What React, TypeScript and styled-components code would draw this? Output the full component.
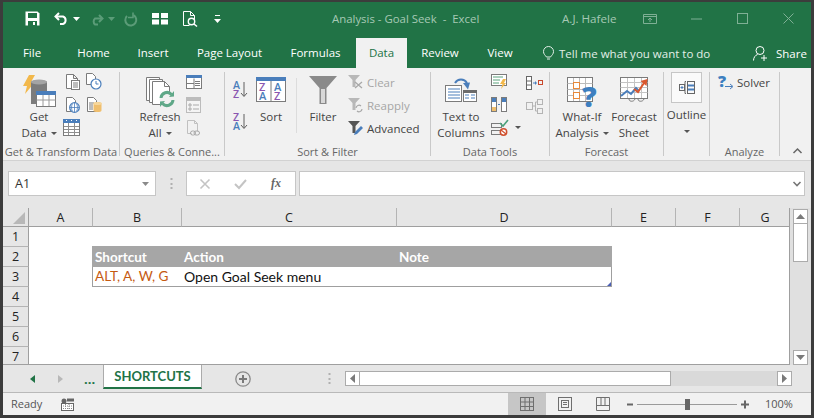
import React from "react";
import styled, { createGlobalStyle } from "styled-components";

const Global = createGlobalStyle`
  html, body { margin: 0; padding: 0; background: #fff; }
  * { box-sizing: border-box; }
`;
const UI = `"Open Sans", "Noto Sans", sans-serif`;
const GREEN = "#217346";

const Frame = styled.div`
  width: 814px; height: 418px; overflow: hidden; display: flex; flex-direction: column;
  border: 3px solid #3c3c3c; border-top-width: 2px; background: #e6e6e6;
  font-family: ${UI}; font-size: 11.5px; color: #444;
`;
const TitleBar = styled.div`
  height: 33px; flex: none; background: ${GREEN}; display: flex; align-items: center; padding-left: 22px; color: #a6c9b5;
`;
const Qat = styled.div`display: flex; align-items: center; width: 307px;`;
const QatItem = styled.span<{ $gap?: number }>`display: block; margin-right: ${p => p.$gap ?? 0}px; line-height: 0;`;
const DocTitle = styled.div`width: 230px; font-size: 11.4px; white-space: pre;`;
const UserName = styled.div`width: 81px; font-size: 11.6px; white-space: pre;`;
const WinBtn = styled.span<{ $w: number }>`display: block; width: ${p => p.$w}px; line-height: 0;`;

const TabBar = styled.div`
  height: 33px; flex: none; background: ${GREEN}; display: flex; align-items: flex-end; color: #fff; font-size: 11.5px;
`;
const RTab = styled.div<{ $w: number; $active?: boolean }>`
  width: ${p => p.$w}px; height: 30px; line-height: 30px; text-align: center; white-space: nowrap; flex: none;
  ${p => p.$active ? `background:#f1f1f1;color:${GREEN};` : ""}
`;
const TellMe = styled.div`display: flex; align-items: center; gap: 5px; width: 226px; height: 30px; padding-left: 16px; color: #e3efe8; white-space: nowrap;`;
const ShareBox = styled.div`display: flex; align-items: center; gap: 8px; height: 30px;`;

const Ribbon = styled.div`
  height: 93px; flex: none; background: #f1f1f1; border-bottom: 1px solid #d2d2d2; display: flex; padding-top: 4px; color: #444;
`;
const Group = styled.div<{ $w: number }>`
  width: ${p => p.$w}px; height: 84px; flex: none; display: flex; flex-direction: column; border-right: 1px solid #c9c9c9;
`;
const GroupBody = styled.div<{ $pl?: number }>`height: 74px; display: flex; align-items: flex-start; padding-left: ${p => p.$pl ?? 0}px;`;
const GroupLabel = styled.div`height: 10px; line-height: 12px; text-align: center; color: #666; font-size: 11px; white-space: nowrap;`;
const Large = styled.div<{ $w: number; $ml?: number }>`
  width: ${p => p.$w}px; margin-left: ${p => p.$ml ?? 0}px; flex: none; display: flex; flex-direction: column; align-items: center;
`;
const LargeIcon = styled.div<{ $pt?: number }>`height: 37px; padding-top: ${p => p.$pt ?? 2}px; line-height: 0;`;
const LargeText = styled.div`line-height: 16px; text-align: center; white-space: nowrap;`;
const Caret = styled.span`
  display: inline-block; width: 0; height: 0; margin-left: 4px; vertical-align: 2px;
  border-left: 3px solid transparent; border-right: 3px solid transparent; border-top: 3px solid #555;
`;
const SmallCol = styled.div<{ $w?: number; $ml?: number; $pt?: number; $gap?: number }>`
  width: ${p => p.$w ?? 16}px; margin-left: ${p => p.$ml ?? 0}px; padding-top: ${p => p.$pt ?? 0}px;
  flex: none; display: flex; flex-direction: column; gap: ${p => p.$gap ?? 5}px;
`;
const SmallCell = styled.div<{ $ml?: number }>`height: 18px; display: flex; align-items: center; margin-left: ${p => p.$ml ?? 0}px; line-height: 0;`;
const VSep = styled.div`width: 1px; height: 55px; background: #dcdcdc; margin: 6px 0 0 5px; flex: none;`;
const FilterList = styled.div`margin-left: 5px; display: flex; flex-direction: column; gap: 5px; padding-top: 1px;`;
const FilterRow = styled.div<{ $off?: boolean }>`
  height: 18px; display: flex; align-items: center; gap: 3px; white-space: nowrap; color: ${p => p.$off ? "#a6a6a6" : "#444"};
`;
const OutlineBox = styled.div`
  width: 31px; height: 31px; margin-bottom: 4px; background: #fafafa; border: 1px solid #c6c6c6; display: flex; align-items: center; justify-content: center;
`;
const SolverRow = styled.div`display: flex; align-items: center; gap: 3px; height: 18px; margin-top: 1px;`;
const Collapse = styled.div`flex: 1; display: flex; justify-content: center; padding: 76px 0 0 4px; line-height: 0;`;

const FormulaArea = styled.div`
  height: 47px; flex: none; display: flex; align-items: flex-start; padding: 10px 6px 0 5px; background: #e6e6e6;
`;
const NameBox = styled.div`
  width: 148px; height: 25px; background: #fff; border: 1px solid #c6c6c6; display: flex; align-items: center; justify-content: space-between;
  padding: 0 6px 0 6px; font-size: 12.5px; color: #333;
`;
const Grip = styled.div`width: 30px; height: 25px; display: flex; align-items: center; justify-content: center; line-height: 0;`;
const FxBox = styled.div`
  width: 110px; height: 25px; background: #fff; border: 1px solid #c6c6c6; display: flex; align-items: center; gap: 24px; padding-left: 13px;
`;
const FxText = styled.span`font-family: "Liberation Serif", serif; font-style: italic; font-weight: 700; font-size: 12px; color: #666;`;
const FormulaInput = styled.div`
  flex: 1; margin-left: 3px; height: 25px; background: #fff; border: 1px solid #c6c6c6; display: flex; align-items: center; justify-content: flex-end; padding-right: 3px; line-height: 0;
`;

const SheetArea = styled.div`height: 157px; flex: none; display: flex;`;
const Sheet = styled.div`
  width: 787px; height: 157px; overflow: hidden; flex: none; background: #fff;
  display: grid; align-content: start; grid-template-columns: 26px 64px 89px 215px 215px 64px 64px 50px; grid-template-rows: 19px repeat(7, 20px);
  border-right: 1px solid #9f9f9f; border-bottom: 1px solid #9f9f9f;
`;
const Corner = styled.div`
  background: #e6e6e6; border-bottom: 1px solid #9f9f9f; border-right: 1px solid #9f9f9f; display: flex; align-items: flex-end; justify-content: flex-end; padding: 0 3px 2px 0; line-height: 0;
`;
const ColHead = styled.div<{ $last?: boolean }>`
  background: #e6e6e6; border-bottom: 1px solid #9f9f9f; border-right: ${p => p.$last ? "0" : "1px solid #b4b4b4"};
  text-align: center; line-height: 19px; font-size: 12.5px; color: #222;
`;
const RowHead = styled.div`
  background: #e6e6e6; border-bottom: 1px solid #b4b4b4; border-right: 1px solid #9f9f9f; text-align: center; line-height: 20px; font-size: 12.5px; color: #222;
`;
const Cell = styled.div`background: #fff;`;
const HeadCell = styled.div<{ $first?: boolean }>`
  background: #a6a6a6; color: #fff; font-family: Lato, sans-serif; font-weight: 700; font-size: 13.5px; line-height: 23px; white-space: nowrap; height: 21px; margin-top: -1px;
  ${p => p.$first ? "margin-left: -1px; padding-left: 3px;" : "padding-left: 2px;"}
`;
const BodyCell = styled.div<{ $tone?: boolean; $left?: boolean; $right?: boolean }>`
  position: relative; height: 20px; border-bottom: 1px solid #9f9f9f;
  ${p => p.$left ? "border-left: 1px solid #9f9f9f; margin-left: -1px; padding-left: 2px;" : "padding-left: 2px;"}
  ${p => p.$right ? "border-right: 1px solid #9f9f9f;" : ""}
  font-family: Lato, sans-serif; font-size: ${p => p.$tone ? 13.6 : 14}px; line-height: 19px; white-space: nowrap;
  color: ${p => p.$tone ? "#c55a11" : "#111"};
`;
const ResizeMark = styled.span`
  position: absolute; right: 0; bottom: 0; width: 0; height: 0; border-left: 4px solid transparent; border-bottom: 4px solid #4a5fb5;
`;
const VScroll = styled.div`
  flex: 1; background: #e0e0e0; display: flex; flex-direction: column; align-items: center; padding-top: 1px;
`;
const SBtn = styled.div<{ $h?: number; $w?: number }>`
  width: ${p => p.$w ?? 15}px; height: ${p => p.$h ?? 15}px; flex: none; background: #fff; border: 1px solid #ababab; display: flex; align-items: center; justify-content: center; line-height: 0;
`;
const VThumb = styled.div`width: 15px; height: 38px; background: #fff; border: 1px solid #ababab; border-top: 0; flex: none;`;
const VSpacer = styled.div`flex: 1;`;

const TabsRow = styled.div`height: 28px; flex: none; display: flex; align-items: flex-start; background: #e6e6e6; border-bottom: 1px solid #b9b9b9;`;
const NavArea = styled.div`width: 100px; height: 27px; display: flex; align-items: center; padding-left: 27px; line-height: 0;`;
const Ellipsis = styled.span`color: ${GREEN}; font-weight: 700; font-size: 13px; line-height: 16px; margin-left: 21px; letter-spacing: 0;`;
const SheetTab = styled.div`
  width: 99px; height: 24px; flex: none; background: #fff; border-left: 1px solid #ababab; border-right: 1px solid #ababab; border-bottom: 2px solid ${GREEN};
  color: ${GREEN}; font-family: Lato, sans-serif; font-weight: 700; font-size: 13px; line-height: 23px; text-align: center;
`;
const AddSheet = styled.div`width: 129px; height: 27px; display: flex; align-items: center; justify-content: space-between; padding: 0 0 0 33px; line-height: 0; flex: none;`;
const HScroll = styled.div`margin-left: 14px; display: flex; padding-top: 6px;`;
const HThumb = styled.div`width: 311px; height: 15px; background: #fff; border: 1px solid #ababab; border-left: 0;`;
const HTrack = styled.div`width: 106px; height: 15px; background: #d9d9d9;`;

const StatusBar = styled.div`flex: 1; background: #f1f1f1; display: flex; align-items: stretch;`;
const Ready = styled.div`width: 58px; padding-left: 8px; line-height: 21px; font-size: 11px; color: #555;`;
const Macro = styled.div`width: 447px; display: flex; align-items: center; line-height: 0;`;
const ViewBtn = styled.div<{ $on?: boolean }>`
  width: 38px; flex: none; display: flex; align-items: center; justify-content: center; line-height: 0; background: ${p => p.$on ? "#c6c6c6" : "transparent"};
`;
const Zoomer = styled.div`display: flex; align-items: center; margin-left: 5px; line-height: 0;`;
const Pct = styled.div`margin-left: 16px; line-height: 21px; font-size: 11px; color: #555;`;

const Ic: React.FC<{ w: number; h: number; children: React.ReactNode }> = ({ w, h, children }) => (
  <svg width={w} height={h} viewBox={`0 0 ${w} ${h}`} fill="none" style={{ display: "block", flex: "none", overflow: "visible" }}>{children}</svg>
);
const G = "#7b7b7b";
const B = "#4a7ebb";
const P = "#8a56b0";
const WIN = "#7fb095";

const Doc = () => <path d="M1.5 1.5h7l4 4v10h-11z M8.5 1.5v4h4" stroke={G} fill="#fff" />;

const SaveIcon = () => (
  <Ic w={15} h={15}><path d="M.5.5h12l2 2v12H.5z" fill="#fff" /><rect x="3" y="2" width="9" height="5" fill={GREEN} /><rect x="3" y="10" width="9" height="5" fill={GREEN} /><rect x="8" y="11" width="2" height="3" fill="#fff" /></Ic>
);
const UndoIcon = ({ c = "#fff" }: { c?: string }) => (
  <Ic w={15} h={13}><path d="M5 1 1.5 4.5 5 8" stroke={c} strokeWidth="2" /><path d="M2 4.5h7a4 4 0 0 1 0 7.5H6" stroke={c} strokeWidth="2" /></Ic>
);
const RedoIcon = () => (
  <Ic w={15} h={13}><g transform="matrix(-1 0 0 1 15 0)"><path d="M5 3 1.5 6.5 5 10" stroke="#5b9c78" strokeWidth="2" /><path d="M2 6.5h7a4 4 0 0 1 0 6H6" stroke="#5b9c78" strokeWidth="2" /></g></Ic>
);
const RepeatIcon = () => (
  <Ic w={14} h={14}><path d="M9.5 3.2A5.5 5.5 0 1 1 3 4" stroke="#5b9c78" strokeWidth="2" /><path d="M9 .5v5h-5" stroke="#5b9c78" strokeWidth="1.6" /></Ic>
);
const QatCaret = ({ c = "#fff" }: { c?: string }) => <Ic w={7} h={4}><path d="M0 0h7L3.5 4z" fill={c} /></Ic>;
const FormIcon = () => (
  <Ic w={16} h={12}><rect x="0" y="0" width="7" height="5" fill="#fff" /><rect x="9" y="0" width="7" height="5" fill="#fff" /><rect x="0" y="6.5" width="7" height="5" fill="#fff" /><rect x="9" y="6.5" width="7" height="5" fill="#fff" /></Ic>
);
const PreviewIcon = () => (
  <Ic w={15} h={16}><path d="M.5.5h7l4 4v4M.5.5v14h6M7.5.5v4h4" stroke="#fff" /><circle cx="8.5" cy="10.5" r="3.2" stroke="#fff" strokeWidth="1.4" /><path d="m11 13 3 2.5" stroke="#fff" strokeWidth="1.6" /></Ic>
);
const CustomIcon = () => <Ic w={7} h={8}><path d="M1 .5h5" stroke="#fff" /><path d="M0 4h7L3.5 8z" fill="#fff" /></Ic>;

const GetDataIcon = () => (
  <Ic w={34} h={33}>
    <path d="M7 1h6L9 8h4L3 20l2-8H1z" fill="#f2b84b" />
    <path d="M9 8c0-2.5 16-2.5 16 0v22H9z" fill="#7c7c7c" />
    <ellipse cx="17" cy="8" rx="8" ry="2.6" fill="#a4a4a4" />
    <rect x="14.5" y="17.5" width="19" height="15" fill="#fff" stroke={G} />
    <rect x="14" y="17" width="20" height="4" fill={B} />
    <path d="M14.5 26h19M21 21v11M27 21v11" stroke="#9a9a9a" />
  </Ic>
);
const DocLines = () => <Ic w={15} h={17}><Doc /><rect x="6.5" y="7.5" width="8" height="9" fill="#fff" stroke={G} /><path d="M8 10h5M8 12h5M8 14h5" stroke={G} /></Ic>;
const DocClock = () => <Ic w={17} h={17}><path d="M1.5 .5h6l3 3v8h-9z" stroke={G} fill="#fff" /><circle cx="11" cy="11" r="5" fill="#fff" stroke={B} strokeWidth="1.2" /><path d="M11 8v3h2.5" stroke={B} /></Ic>;
const DocWeb = () => <Ic w={15} h={17}><path d="M1.5 1.5h6l3 3v11h-9z" stroke={G} fill="#fff" /><circle cx="9.5" cy="11.5" r="4.8" fill="#fff" stroke={B} strokeWidth="1.3" /><path d="M5 11.5h9M9.5 7v9M7.3 8c-1 2-1 5 0 7M11.7 8c1 2 1 5 0 7" stroke={B} strokeWidth=".8" /></Ic>;
const DocDb = () => <Ic w={15} h={15}><path d="M.5.5h6l3 3v11h-9z" stroke={G} fill="#fff" /><path d="M2 6h5M2 8h4M2 10h4M2 12h4" stroke={G} /><path d="M6.5 6.5c0-2 8-2 8 0v7c0 2-8 2-8 0z" fill="#f0bf6e" /><ellipse cx="10.5" cy="6.5" rx="4" ry="1.5" fill="#f7d79b" /></Ic>;
const SmallTable = () => <Ic w={17} h={17}><rect x=".5" y=".5" width="16" height="16" fill="#fff" stroke={G} /><rect x="0" y="0" width="17" height="4" fill={B} /><path d="M1 7.5h15M1 10.5h15M1 13.5h15M5.5 4v12M11.5 4v12" stroke="#8f8f8f" /><path d="M3 1.5h1M8 1.5h1M13 1.5h1" stroke="#fff" /></Ic>;

const RefreshIcon = () => (
  <Ic w={30} h={31}>
    <path d="M1.5 1.5h13v23h-13z" fill="#fff" stroke={G} />
    <path d="M4.5 3.5h13v23h-13z" fill="#fff" stroke={G} />
    <path d="M7.5 5.5h12l5 5v18h-17z" fill="#fff" stroke={G} />
    <path d="M19.5 5.5v5h5" stroke={G} />
    <circle cx="22" cy="23" r="7.5" fill="#f1f1f1" />
    <path d="M16 22a6 6 0 0 1 10.5-3.5M28 24a6 6 0 0 1-10.5 3.5" stroke="#5fa888" strokeWidth="3" />
    <path d="m24 21 5-.5V15zM20 25l-5 .5V31z" fill="#5fa888" />
  </Ic>
);
const QueriesIcon = () => <Ic w={16} h={14}><rect x=".5" y=".5" width="15" height="13" fill="#fff" stroke={G} /><rect width="16" height="3" fill={B} /><path d="M8 3.5v10M9 6.5h5M9 8.5h5M9 10.5h5M1 8.5h7" stroke={G} /></Ic>;
const PropsIcon = () => <Ic w={15} h={16}><rect x=".5" y=".5" width="14" height="15" fill="#f4f4f4" stroke="#bcbcbc" /><rect x="1" y="1" width="13" height="3" fill="#bcbcbc" /><path d="M3 7h2v2H3zM3 11h2v2H3z" stroke="#aaa" /><path d="M7 8h6M7 12h6" stroke="#aaa" /></Ic>;
const LinksIcon = () => <Ic w={14} h={16}><path d="M1.5.5h7l3 3v8M1.5.5v13h4M8.5.5v3h3" stroke="#c0c0c0" /><rect x="4.5" y="11" width="5" height="4" rx="2" stroke="#a8a8a8" /><rect x="8" y="11" width="5.5" height="4" rx="2" stroke="#a8a8a8" /></Ic>;

const SortAZ = ({ rev }: { rev?: boolean }) => (
  <Ic w={15} h={17}>
    <text x="0" y="8" fontFamily="Open Sans" fontWeight="600" fontSize="10.5" fill={rev ? P : B}>{rev ? "Z" : "A"}</text>
    <text x="0" y="16.5" fontFamily="Open Sans" fontWeight="600" fontSize="10.5" fill={rev ? B : P}>{rev ? "A" : "Z"}</text>
    <path d="M11 1v14M8 12l3 3.5 3-3.5" stroke="#5f5f5f" />
  </Ic>
);
const SortBig = () => (
  <Ic w={30} h={25}>
    <rect x=".5" y=".5" width="29" height="24" fill="#fff" stroke={G} /><rect width="30" height="4" fill={B} /><path d="M15 4v20" stroke={G} />
    <text x="3" y="13.5" fontFamily="Open Sans" fontWeight="600" fontSize="11" fill={P}>Z</text>
    <text x="3" y="23" fontFamily="Open Sans" fontWeight="600" fontSize="11" fill={B}>A</text>
    <text x="18" y="13.5" fontFamily="Open Sans" fontWeight="600" fontSize="11" fill={B}>A</text>
    <text x="18" y="23" fontFamily="Open Sans" fontWeight="600" fontSize="11" fill={P}>Z</text>
  </Ic>
);
const FunnelBig = () => <Ic w={28} h={28}><path d="M0 0h28L17.5 12v16h-7V12z" fill="#8a8a8a" /><path d="M12 13h4v14h-4z" fill="#d8d8d8" /></Ic>;
const Funnel = ({ c }: { c: string }) => <path d="M0 1h12L7.5 6v7h-3V6z" fill={c} />;
const ClearIcon = () => <Ic w={16} h={16}><Funnel c="#b8b8b8" /><path d="m7 8 7 6M14 8l-7 6" stroke="#a8a8a8" strokeWidth="1.3" /></Ic>;
const ReapplyIcon = () => <Ic w={16} h={16}><Funnel c="#b8b8b8" /><path d="M8 11a3 3 0 0 1 5-2M14 12a3 3 0 0 1-5 2" stroke="#a8a8a8" strokeWidth="1.2" /></Ic>;
const AdvancedIcon = () => <Ic w={16} h={16}><Funnel c="#555" /><path d="m6 15 1-3 6-6 2 2-6 6z" fill={B} /></Ic>;

const TextColsIcon = () => (
  <Ic w={32} h={26}>
    <rect x=".5" y="9.5" width="16" height="16" fill="#fff" stroke={G} /><path d="M3 13h12M3 16h12M3 19h12M3 22h12" stroke={B} />
    <rect x="18.5" y="14.5" width="13" height="11" fill="#fff" stroke={G} /><rect x="18" y="14" width="14" height="3" fill="#6b6b6b" /><path d="M20 19h4M26 19h4M20 22h4M26 22h4" stroke={B} />
    <path d="M10 7a7 7 0 0 1 12 0" stroke={B} strokeWidth="2" /><path d="m18 7 7-.5-2 7z" fill={B} />
  </Ic>
);
const FlashIcon = () => <Ic w={16} h={15}><rect x=".5" y=".5" width="15" height="11" fill="#fff" stroke={G} /><path d="M2 3h10M2 6h7M2 9h6" stroke="#5aa27c" /><path d="M12 5h3l-2 4h2l-5 6 1.5-5H9z" fill="#f2b84b" /></Ic>;
const DupIcon = () => <Ic w={16} h={15}><rect x=".5" y=".5" width="5" height="14" fill="#fff" stroke={G} /><rect x="10.5" y=".5" width="5" height="14" fill="#fff" stroke={G} /><rect x="1" y="1" width="4" height="4" fill={B} /><rect x="11" y="1" width="4" height="4" fill={B} /><rect x="1" y="10" width="4" height="4" fill="#f0bf6e" /><path d="M7 7.5h2" stroke={B} /></Ic>;
const ValidateIcon = () => <Ic w={17} h={17}><rect x=".5" y="4.5" width="10" height="4" stroke={G} /><rect x=".5" y="11.5" width="10" height="4" stroke={G} /><path d="m9 4 3 3 5-6" stroke="#4aa07a" strokeWidth="1.6" /><circle cx="12.5" cy="13" r="3.2" stroke="#d0512f" strokeWidth="1.5" fill="#fff" /><path d="m10 11 5 4" stroke="#d0512f" strokeWidth="1.3" /></Ic>;
const ConsolidateIcon = () => <Ic w={17} h={15}><rect x=".5" y=".5" width="5" height="13" fill="#fff" stroke="#666" /><path d="M1 5h4M1 9h4" stroke="#666" /><path d="M7 7h3" stroke={B} /><path d="m9 5 2 2-2 2z" fill={B} /><rect x="12.5" y="4.5" width="4" height="4" stroke="#c9482b" /></Ic>;
const RelIcon = () => <Ic w={17} h={15}><rect x=".5" y="3.5" width="6" height="7" stroke="#b4b4b4" /><rect x="11.5" y=".5" width="5" height="5" stroke="#b4b4b4" /><rect x="11.5" y="9.5" width="5" height="5" stroke="#b4b4b4" /><path d="M7 7h2.5M9.5 3v9M9.5 3h2M9.5 12h2" stroke="#b4b4b4" /></Ic>;

const WhatIfIcon = () => (
  <Ic w={30} h={31}>
    <rect x=".5" y=".5" width="25" height="24" fill="#fff" stroke={G} /><path d="M.5 6.5h25M.5 12.5h25M.5 18.5h25M6.5 1v23M12.5 1v23M18.5 1v23" stroke="#bcbcbc" />
    <rect x="6.5" y="5.5" width="6" height="6" fill="#fff" stroke="#e8893a" /><rect x="6.5" y="15.5" width="6" height="6" fill="#fff" stroke="#e8893a" />
    <text x="15" y="30" fontFamily="Open Sans" fontWeight="800" fontSize="29" fill="#3d7fc0">?</text>
  </Ic>
);
const ForecastIcon = () => (
  <Ic w={29} h={26}>
    <rect x=".5" y=".5" width="27" height="21" fill="#fff" stroke={G} /><path d="M.5 5.5h27M.5 10.5h27M.5 15.5h27M7.5 1v20M14.5 1v20M21.5 1v20" stroke="#c4c4c4" />
    <path d="m1 19 6-5 4 3 5-6 3 3" stroke={B} strokeWidth="2" /><path d="m14 12 4 3 6-9" stroke="#d9582f" strokeWidth="2" /><path d="m20.500 4 7-2-1 7z" fill="#d9582f" />
    <path d="M9 22c0 3 5 3 6 0M18 22c0 3 5 3 6 0" stroke={G} />
  </Ic>
);
const OutlineIcon = () => <Ic w={16} h={13}><rect x=".5" y="3.500" width="5" height="6" stroke="#666" /><path d="M1.500 6.500h3M3 5v3" stroke={B} /><path d="M7 .5h-1v12h1" stroke="#666" /><rect x="8.500" y=".5" width="7" height="12" stroke="#666" /><path d="M9 4.500h6M9 8.500h6" stroke={B} strokeWidth="2" /></Ic>;
const SolverIcon = () => <Ic w={16} h={16}><text x="0" y="13" fontFamily="Open Sans" fontWeight="800" fontSize="16" fill="#3d7fc0">?</text><path d="M7 12.500h7" stroke={B} /><path d="m12 10 3 2.500-3 2.500" stroke={B} /></Ic>;

const cols = ["A", "B", "C", "D", "E", "F", "G"];

export default function App() {
  return (
    <Frame>
      <Global />
      <TitleBar>
        <Qat>
          <QatItem $gap={14}><SaveIcon /></QatItem>
          <QatItem $gap={4}><UndoIcon /></QatItem>
          <QatItem $gap={9}><QatCaret /></QatItem>
          <QatItem $gap={4}><RedoIcon /></QatItem>
          <QatItem $gap={9}><QatCaret c="#5b9c78" /></QatItem>
          <QatItem $gap={14}><RepeatIcon /></QatItem>
          <QatItem $gap={15}><FormIcon /></QatItem>
          <QatItem $gap={16}><PreviewIcon /></QatItem>
          <QatItem><CustomIcon /></QatItem>
        </Qat>
        <DocTitle>Analysis - Goal Seek  -  Excel</DocTitle>
        <UserName>A.J. Hafele</UserName>
        <WinBtn $w={48}><Ic w={14} h={10}><path d="M.5.500h13v9H.5zM.5 2.500h13M7 8V4M5 6l2-2 2 2" stroke={WIN} /></Ic></WinBtn>
        <WinBtn $w={46}><Ic w={11} h={2}><path d="M0 1h11" stroke={WIN} /></Ic></WinBtn>
        <WinBtn $w={46}><Ic w={11} h={11}><rect x=".5" y=".5" width="10" height="10" stroke={WIN} /></Ic></WinBtn>
        <WinBtn $w={11}><Ic w={11} h={11}><path d="m.5.5 10 10M10.500.5l-10 10" stroke={WIN} /></Ic></WinBtn>
      </TitleBar>
      <TabBar>
        <RTab $w={58}>File</RTab>
        <RTab $w={65}>Home</RTab>
        <RTab $w={54}>Insert</RTab>
        <RTab $w={99}>Page Layout</RTab>
        <RTab $w={73}>Formulas</RTab>
        <RTab $w={4} />
        <RTab $w={51} $active>Data</RTab>
        <RTab $w={66}>Review</RTab>
        <RTab $w={54}>View</RTab>
        <TellMe>
          <Ic w={11} h={15}><path d="M3.500 11C2 9 .5 8 .5 5.500a5 5 0 0 1 10 0C10.500 8 9 9 7.500 11zM4 13h3" stroke="#e3efe8" /></Ic>
          Tell me what you want to do
        </TellMe>
        <ShareBox>
          <Ic w={15} h={15}><circle cx="7" cy="4.500" r="4" stroke="#fff" /><path d="M.5 14.500c0-3 2-5.500 4-6M9 9.500h0M11 9v6M8 12h6" stroke="#fff" /></Ic>
          Share
        </ShareBox>
      </TabBar>
      <Ribbon>
        <Group $w={117}>
          <GroupBody $pl={10}>
            <Large $w={52}><LargeIcon><GetDataIcon /></LargeIcon><LargeText>Get<br />Data<Caret /></LargeText></Large>
            <SmallCol $w={20}>
              <SmallCell><DocLines /></SmallCell>
              <SmallCell><DocWeb /></SmallCell>
              <SmallCell $ml={-2}><SmallTable /></SmallCell>
            </SmallCol>
            <SmallCol>
              <SmallCell><DocClock /></SmallCell>
              <SmallCell $ml={2}><DocDb /></SmallCell>
            </SmallCol>
          </GroupBody>
          <GroupLabel>Get &amp; Transform Data</GroupLabel>
        </Group>
        <Group $w={105}>
          <GroupBody $pl={15}>
            <Large $w={50}><LargeIcon $pt={4}><RefreshIcon /></LargeIcon><LargeText>Refresh<br />All<Caret /></LargeText></Large>
            <SmallCol $ml={1} $pt={1}>
              <SmallCell><QueriesIcon /></SmallCell>
              <SmallCell><PropsIcon /></SmallCell>
              <SmallCell><LinksIcon /></SmallCell>
            </SmallCol>
          </GroupBody>
          <GroupLabel>Queries &amp; Conne...</GroupLabel>
        </Group>
        <Group $w={206}>
          <GroupBody $pl={8}>
            <SmallCol $w={15} $pt={8} $gap={14}>
              <SmallCell><SortAZ /></SmallCell>
              <SmallCell><SortAZ rev /></SmallCell>
            </SmallCol>
            <Large $w={40} $ml={3}><LargeIcon $pt={5}><SortBig /></LargeIcon><LargeText>Sort</LargeText></Large>
            <VSep />
            <Large $w={40} $ml={6}><LargeIcon $pt={4}><FunnelBig /></LargeIcon><LargeText>Filter</LargeText></Large>
            <FilterList>
              <FilterRow $off><ClearIcon />Clear</FilterRow>
              <FilterRow $off><ReapplyIcon />Reapply</FilterRow>
              <FilterRow><AdvancedIcon />Advanced</FilterRow>
            </FilterList>
          </GroupBody>
          <GroupLabel>Sort &amp; Filter</GroupLabel>
        </Group>
        <Group $w={119}>
          <GroupBody>
            <Large $w={60}><LargeIcon $pt={4}><TextColsIcon /></LargeIcon><LargeText>Text to<br />Columns</LargeText></Large>
            <SmallCol $w={35}>
              <SmallCell><FlashIcon /></SmallCell>
              <SmallCell><DupIcon /></SmallCell>
              <SmallCell><ValidateIcon /><Caret style={{ marginLeft: 7 }} /></SmallCell>
            </SmallCol>
            <SmallCol $w={18} $pt={2}>
              <SmallCell><ConsolidateIcon /></SmallCell>
              <SmallCell><RelIcon /></SmallCell>
            </SmallCol>
          </GroupBody>
          <GroupLabel>Data Tools</GroupLabel>
        </Group>
        <Group $w={114}>
          <GroupBody $pl={4}>
            <Large $w={56}><LargeIcon $pt={5}><WhatIfIcon /></LargeIcon><LargeText>What-If<br />Analysis<Caret /></LargeText></Large>
            <Large $w={48}><LargeIcon $pt={5}><ForecastIcon /></LargeIcon><LargeText>Forecast<br />Sheet</LargeText></Large>
          </GroupBody>
          <GroupLabel>Forecast</GroupLabel>
        </Group>
        <Group $w={46}>
          <GroupBody $pl={7}>
            <Large $w={31}>
              <OutlineBox><OutlineIcon /></OutlineBox>
              <LargeText>Outline</LargeText>
              <LargeText><Caret style={{ margin: 0 }} /></LargeText>
            </Large>
          </GroupBody>
        </Group>
        <Group $w={70}>
          <GroupBody $pl={8}>
            <SolverRow><SolverIcon />Solver</SolverRow>
          </GroupBody>
          <GroupLabel>Analyze</GroupLabel>
        </Group>
        <Collapse>
          <Ic w={9} h={6}><path d="m.5 5 4-4 4 4" stroke="#666" strokeWidth="1.5" /></Ic>
        </Collapse>
      </Ribbon>
      <FormulaArea>
        <NameBox>A1<Ic w={7} h={4}><path d="M0 0h7L3.500 4z" fill="#8a8a8a" /></Ic></NameBox>
        <Grip><Ic w={3} h={13}><path d="M1.500 1v2M1.500 6v2M1.500 10v2" stroke="#b0b0b0" strokeWidth="2" /></Ic></Grip>
        <FxBox>
          <Ic w={10} h={10}><path d="m.5.5 9 9M9.500.5l-9 9" stroke="#c4c4c4" strokeWidth="1.6" /></Ic>
          <Ic w={13} h={10}><path d="m1 5 4 4 7-8" stroke="#c4c4c4" strokeWidth="2" /></Ic>
          <FxText>fx</FxText>
        </FxBox>
        <FormulaInput><Ic w={8} h={6}><path d="m.5 1 3.500 3.500L7.500 1" stroke="#777" strokeWidth="1.6" /></Ic></FormulaInput>
      </FormulaArea>
      <SheetArea>
        <Sheet>
          <Corner><Ic w={12} h={12}><path d="M12 0v12H0z" fill="#b8b8b8" /></Ic></Corner>
          {cols.map((c, i) => <ColHead key={c} $last={i === 6}>{c}</ColHead>)}

          <RowHead>1</RowHead>
          {cols.map(c => <Cell key={c} />)}

          <RowHead>2</RowHead>
          <Cell />
          <HeadCell $first>Shortcut</HeadCell>
          <HeadCell>Action</HeadCell>
          <HeadCell>Note</HeadCell>
          <Cell /><Cell /><Cell />

          <RowHead>3</RowHead>
          <Cell />
          <BodyCell $tone $left>ALT, A, W, G</BodyCell>
          <BodyCell>Open Goal Seek menu</BodyCell>
          <BodyCell $right><ResizeMark /></BodyCell>
          <Cell /><Cell /><Cell />

          {[4, 5, 6, 7].map(n => (
            <React.Fragment key={n}>
              <RowHead>{n}</RowHead>
              {cols.map(c => <Cell key={c} />)}
            </React.Fragment>
          ))}
        </Sheet>
        <VScroll>
          <SBtn><Ic w={9} h={5}><path d="M4.500 0 9 5H0z" fill="#7a7a7a" /></Ic></SBtn>
          <VThumb />
          <VSpacer />
          <SBtn><Ic w={9} h={5}><path d="M0 0h9L4.500 5z" fill="#7a7a7a" /></Ic></SBtn>
        </VScroll>
      </SheetArea>
      <TabsRow>
        <NavArea>
          <Ic w={5} h={8}><path d="M5 0v8L0 4z" fill={GREEN} /></Ic>
          <Ic w={28} h={8}><path d="M23 0v8l5-4z" fill="#b8b8b8" /></Ic>
          <Ellipsis>...</Ellipsis>
        </NavArea>
        <SheetTab>SHORTCUTS</SheetTab>
        <AddSheet>
          <Ic w={16} h={16}><circle cx="8" cy="8" r="7.200" stroke="#8a8a8a" strokeWidth="1.300" /><path d="M8 4v8M4 8h8" stroke="#7a7a7a" strokeWidth="2" /></Ic>
          <Ic w={3} h={13}><path d="M1.500 1v2M1.500 6v2M1.500 10v2" stroke="#b0b0b0" strokeWidth="2" /></Ic>
        </AddSheet>
        <HScroll>
          <SBtn><Ic w={5} h={9}><path d="M5 0v9L0 4.500z" fill="#7a7a7a" /></Ic></SBtn>
          <HThumb />
          <HTrack />
          <SBtn><Ic w={5} h={9}><path d="M0 0v9l5-4.500z" fill="#7a7a7a" /></Ic></SBtn>
        </HScroll>
      </TabsRow>
      <StatusBar>
        <Ready>Ready</Ready>
        <Macro>
          <Ic w={13} h={13}><circle cx="3" cy="3" r="2.500" fill="#666" /><path d="M6 .5h7v3H6z" fill="#666" /><rect x=".5" y="5.500" width="12" height="7" fill="#fff" stroke="#666" /><path d="M2 8h9M2 10.500h9M4.500 6v6M8 6v6" stroke="#888" strokeDasharray="1 1" /></Ic>
        </Macro>
        <ViewBtn $on><Ic w={14} h={14}><rect x=".5" y=".5" width="13" height="13" stroke="#6f6f6f" /><path d="M5 1v12M9.500 1v12M1 5h12M1 9.500h12" stroke="#6f6f6f" /></Ic></ViewBtn>
        <ViewBtn><Ic w={14} h={14}><rect x=".5" y=".5" width="13" height="13" stroke="#6f6f6f" /><rect x="3.500" y="3.500" width="7" height="7" stroke="#6f6f6f" /><path d="M5 5.500h4M5 7.500h4" stroke="#6f6f6f" /></Ic></ViewBtn>
        <ViewBtn><Ic w={14} h={14}><path d="M.5.5h13v13H.5zM.5 8.500h13M5 .5v8M9 .5v8" stroke="#6f6f6f" /></Ic></ViewBtn>
        <Zoomer>
          <Ic w={122} h={13}>
            <path d="M0 6.500h6" stroke="#666" strokeWidth="2" />
            <path d="M10 6.500h100" stroke="#9a9a9a" />
            <rect x="58" y="1" width="5" height="11" fill="#666" />
            <path d="M122 6.500h-8M118 2.500v8" stroke="#666" strokeWidth="2" />
          </Ic>
        </Zoomer>
        <Pct>100%</Pct>
      </StatusBar>
    </Frame>
  );
}
